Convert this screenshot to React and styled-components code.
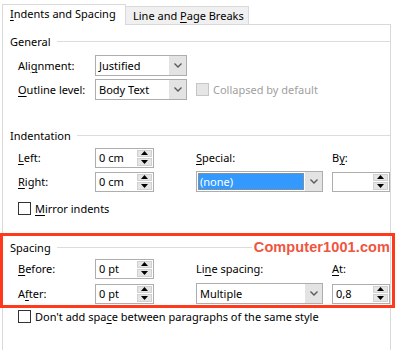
import React from "react";
import styled, { createGlobalStyle } from "styled-components";

const Global = createGlobalStyle`
  html, body { margin: 0; padding: 0; background: #ffffff; }
  body {
    font-family: "Noto Sans", "Open Sans", sans-serif;
    font-size: 11px;
    color: #000;
  }
  * { box-sizing: border-box; }
`;

const Dialog = styled.div`
  width: 397px;
  height: 350px;
  overflow: hidden;
  padding-top: 4px;
`;

const TabBar = styled.div`
  display: flex;
  align-items: flex-end;
  padding-left: 2px;
  height: 20px;
  position: relative;
  z-index: 1;
`;

const Tab = styled.div`
  height: ${(p) => (p.$active ? "21px" : "18px")};
  margin-bottom: ${(p) => (p.$active ? "-1px" : "0")};
  width: ${(p) => p.$w}px;
  padding-left: 7px;
  display: flex;
  align-items: center;
  padding-bottom: ${(p) => (p.$active ? "3px" : "1px")};
  background: ${(p) => (p.$active ? "#ffffff" : "#f0f0f0")};
  border: 1px solid #d9d9d9;
  border-bottom: none;
  border-left: ${(p) => (p.$active ? "1px solid #d9d9d9" : "none")};
  white-space: nowrap;
`;

const Panel = styled.div`
  margin-left: 2px;
  width: 389px;
  height: 340px;
  border: 1px solid #d9d9d9;
  background: #fff;
  padding: 8px 0 0 7px;
`;

const Section = styled.div`
  position: relative;
  margin-top: ${(p) => p.$mt || 0}px;
`;

const Heading = styled.div`
  display: flex;
  align-items: center;
  height: 16px;
  gap: 6px;
`;

const Rule = styled.div`
  flex: 1;
  height: 1px;
  background: #dcdcdc;
`;

const Watermark = styled.div`
  font-family: "Liberation Sans", Arial, sans-serif;
  font-weight: bold;
  font-size: 14.5px;
  color: #ef5540;
  letter-spacing: 0.1px;
  margin-left: -6px;
  padding-left: 2px;
  background: #fff;
  white-space: nowrap;
`;

const Key = styled.span`
  text-decoration: underline;
  text-underline-offset: 2px;
`;

const Rows = styled.div`
  display: flex;
  flex-direction: column;
  gap: ${(p) => p.$gap}px;
  padding-left: 8px;
  margin-top: ${(p) => p.$mt}px;
`;

const Row = styled.div`
  display: flex;
  align-items: center;
  height: 21px;
`;

const Label = styled.div`
  width: ${(p) => p.$w || 77}px;
  white-space: nowrap;
`;

const Grid = styled.div`
  display: grid;
  grid-template-columns: 77px 59px 42px 127px 9px 57px;
  grid-template-rows: 21px 21px;
  row-gap: ${(p) => p.$gap}px;
  align-items: center;
  padding-left: 8px;
  margin-top: ${(p) => p.$mt}px;
`;

const Cell = styled.div`
  grid-column: ${(p) => p.$col};
  white-space: nowrap;
`;

const SelectBox = styled.div`
  grid-column: ${(p) => p.$col || "auto"};
  width: ${(p) => p.$w}px;
  height: 21px;
  border: 1px solid #adadad;
  background: #fff;
  display: flex;
  align-items: stretch;
`;

const SelectValue = styled.div`
  flex: 1;
  display: flex;
  align-items: center;
  padding-left: ${(p) => (p.$selected ? "2px" : "3px")};
  margin: ${(p) => (p.$selected ? "1px" : "0")};
  background: ${(p) => (p.$selected ? "#3399ff" : "transparent")};
  color: ${(p) => (p.$selected ? "#fff" : "#000")};
  outline: ${(p) => (p.$selected ? "1px dotted #c98a40" : "none")};
  outline-offset: -1px;
  white-space: nowrap;
`;

const SelectArrow = styled.div`
  width: 17px;
  background: #e3e3e3;
  display: flex;
  align-items: center;
  justify-content: center;
`;

const SpinBox = styled.div`
  grid-column: ${(p) => p.$col || "auto"};
  width: ${(p) => p.$w}px;
  height: 20px;
  border: 1px solid #adadad;
  background: #fff;
  display: flex;
`;

const SpinValue = styled.div`
  flex: 1;
  display: flex;
  align-items: center;
  padding-left: 3px;
  white-space: nowrap;
`;

const SpinButtons = styled.div`
  width: 16px;
  display: flex;
  flex-direction: column;
  gap: 1px;
  padding: 1px 1px 1px 0;
`;

const SpinBtn = styled.div`
  flex: 1;
  background: #e5e5e5;
  border: 1px solid #d0d0d0;
  display: flex;
  align-items: center;
  justify-content: center;
`;

const CheckRow = styled.div`
  display: flex;
  align-items: center;
  gap: 4px;
  height: 16px;
  color: ${(p) => (p.$disabled ? "#a0a0a0" : "#000")};
  margin-left: ${(p) => p.$ml || 0}px;
  margin-top: ${(p) => p.$mt || 0}px;
  white-space: nowrap;
`;

const Box = styled.div`
  width: 13px;
  height: 13px;
  border: 1px solid ${(p) => (p.$disabled ? "#c6c6c6" : "#333")};
  background: ${(p) => (p.$disabled ? "#e6e6e6" : "#fff")};
`;

const RedFrame = styled.div`
  position: absolute;
  left: -10px;
  right: -5px;
  top: -6px;
  bottom: -4px;
  border: 3px solid #ff3a1c;
  pointer-events: none;
`;

const Chevron = () => (
  <svg width="8" height="5" viewBox="0 0 8 5">
    <path d="M0.5 0.5 L4 4 L7.5 0.5" fill="none" stroke="#5a5a5a" strokeWidth="1.4" />
  </svg>
);

const Tri = ({ down }) => (
  <svg width="7" height="4" viewBox="0 0 7 4">
    {down ? <path d="M0 0 H7 L3.5 4 Z" fill="#000" /> : <path d="M0 4 H7 L3.5 0 Z" fill="#000" />}
  </svg>
);

const Select = ({ value, w, col, selected }) => (
  <SelectBox $w={w} $col={col}>
    <SelectValue $selected={selected}>{value}</SelectValue>
    <SelectArrow>
      <Chevron />
    </SelectArrow>
  </SelectBox>
);

const Spin = ({ value, w = 59, col }) => (
  <SpinBox $w={w} $col={col}>
    <SpinValue>{value}</SpinValue>
    <SpinButtons>
      <SpinBtn>
        <Tri />
      </SpinBtn>
      <SpinBtn>
        <Tri down />
      </SpinBtn>
    </SpinButtons>
  </SpinBox>
);

export default function App() {
  return (
    <>
      <Global />
      <Dialog>
        <TabBar>
          <Tab $active $w={124}>
            <span>
              <Key>I</Key>ndents and Spacing
            </span>
          </Tab>
          <Tab $w={123}>
            <span>
              Line and <Key>P</Key>age Breaks
            </span>
          </Tab>
        </TabBar>
        <Panel>
          <Section>
            <Heading>
              <span>General</span>
              <Rule />
            </Heading>
            <Rows $gap={3} $mt={6}>
              <Row>
                <Label>
                  Ali<Key>g</Key>nment:
                </Label>
                <Select value="Justified" w={92} />
              </Row>
              <Row>
                <Label>
                  <Key>O</Key>utline level:
                </Label>
                <Select value="Body Text" w={92} />
                <CheckRow $disabled $ml={9}>
                  <Box $disabled />
                  <span>Collapsed by default</span>
                </CheckRow>
              </Row>
            </Rows>
          </Section>

          <Section $mt={27}>
            <Heading>
              <span>Indentation</span>
              <Rule />
            </Heading>
            <Grid $gap={3} $mt={4}>
              <Cell $col={1}>
                <Key>L</Key>eft:
              </Cell>
              <Spin value="0 cm" col={2} />
              <Cell $col={4}>
                <Key>S</Key>pecial:
              </Cell>
              <Cell $col={6}>
                B<Key>y</Key>:
              </Cell>
              <Cell $col={1}>
                <Key>R</Key>ight:
              </Cell>
              <Spin value="0 cm" col={2} />
              <Select value="(none)" w={127} col={4} selected />
              <Spin value="" w={58} col={6} />
            </Grid>
            <CheckRow $ml={8} $mt={8}>
              <Box />
              <span>
                <Key>M</Key>irror indents
              </span>
            </CheckRow>
          </Section>

          <Section $mt={23}>
            <Heading>
              <span>Spacing</span>
              <Rule />
              <Watermark>Computer1001.com</Watermark>
            </Heading>
            <Grid $gap={4} $mt={3}>
              <Cell $col={1}>
                <Key>B</Key>efore:
              </Cell>
              <Spin value="0 pt" col={2} />
              <Cell $col={4}>
                Li<Key>n</Key>e spacing:
              </Cell>
              <Cell $col={6}>
                <Key>A</Key>t:
              </Cell>
              <Cell $col={1}>
                A<Key>f</Key>ter:
              </Cell>
              <Spin value="0 pt" col={2} />
              <Select value="Multiple" w={127} col={4} />
              <Spin value="0,8" w={58} col={6} />
            </Grid>
            <RedFrame />
          </Section>
          <CheckRow $ml={8} $mt={4}>
            <Box />
            <span>
              Don't add spa<Key>c</Key>e between paragraphs of the same style
            </span>
          </CheckRow>
        </Panel>
      </Dialog>
    </>
  );
}
